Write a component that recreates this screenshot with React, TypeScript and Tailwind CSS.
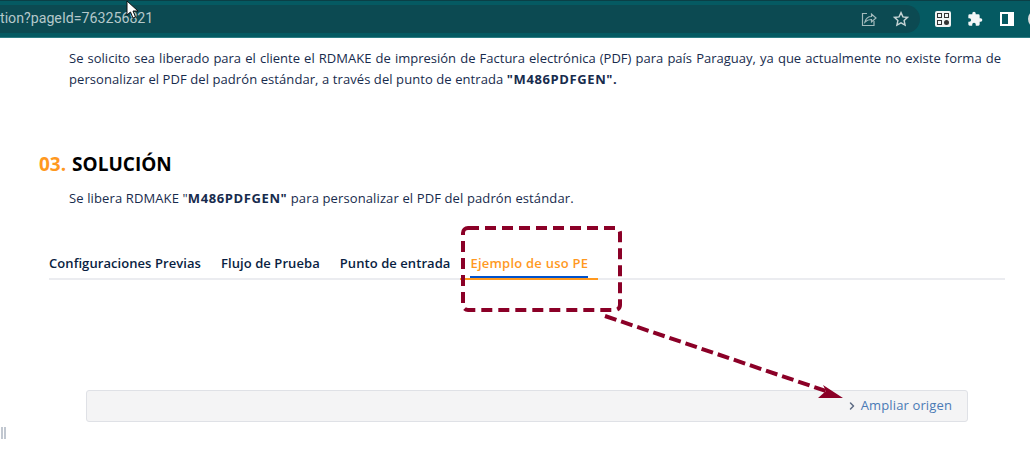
import React from "react";
import { ChevronRight } from "lucide-react";

const font = "font-['Open_Sans','Noto_Sans',sans-serif]";

const Toolbar: React.FC = () => (
  <div className="relative h-[38px] bg-[#055a62] border-t-[1px] border-[#0b3f46] border-b-[1px] border-b-[#2c7d84] flex items-center overflow-hidden">
    <div className="h-[28px] w-[920px] shrink-0 -mt-[1px] bg-[#0c4a52] rounded-r-[14px] flex items-center justify-between pr-[11px] overflow-hidden">
      <span className="text-[14.2px] text-[#b5c8ca] font-['Roboto',sans-serif] whitespace-nowrap">
        tion?pageId=763256821
      </span>
      <div className="flex items-center gap-[16px]">
        <svg width="16" height="16" viewBox="0 0 16 16" fill="none" stroke="#a3babc" strokeWidth="1.2">
          <path d="M6 2.500H1.500V14.500H13V10" />
          <path d="M4 11c1-4 4-5.500 6.500-5.500V3l4.500 4-4.500 4V8.500C8 8.500 6 9 4 11z" />
        </svg>
        <svg width="16" height="16" viewBox="0 0 24 24" fill="none" stroke="#c3d2d3" strokeWidth="2.2">
          <path d="M12 2.500l2.900 6.300 6.900.8-5.100 4.700 1.400 6.800-6.100-3.400-6.100 3.400 1.400-6.800-5.100-4.700 6.900-.8z" />
        </svg>
      </div>
    </div>
    <div className="ml-[15px] shrink-0 w-[16px] h-[16px] bg-[#f1f4f4] rounded-[2px] flex items-center justify-center">
      <svg width="14" height="14" viewBox="0 0 14 14" fill="#333">
        <path d="M1 1h5v5H1zM8 1h5v5H8zM1 8h5v5H1z" />
        <path d="M2 2h3v3H2zM9 2h3v3H9zM2 9h3v3H2z" fill="#f1f4f4" />
        <circle cx="10.500" cy="10.500" r="2.500" />
      </svg>
    </div>
    <svg className="ml-[16px] shrink-0" width="16" height="16" viewBox="0 0 24 24" fill="#f4f7f7">
      <path d="M20.500 11H19V7a2 2 0 0 0-2-2h-4V3.500a2.500 2.500 0 0 0-5 0V5H4a2 2 0 0 0-2 2v3.800h1.500a2.700 2.700 0 0 1 0 5.400H2V20a2 2 0 0 0 2 2h3.800v-1.500a2.700 2.700 0 0 1 5.400 0V22H17a2 2 0 0 0 2-2v-4h1.500a2.500 2.500 0 0 0 0-5z" />
    </svg>
    <div className="ml-[17px] shrink-0 w-[14px] h-[14px] bg-white p-[2px] flex justify-start">
      <div className="w-[6px] h-full bg-[#055a62]" />
    </div>
    <div className="ml-[14px] shrink-0 w-[18px] h-[18px] rounded-full bg-[#d8dcdc]" />
  </div>
);

const tabs = ["Configuraciones Previas", "Flujo de Prueba", "Punto de entrada"];

const App: React.FC = () => (
  <div className={`relative h-[471px] w-[1030px] overflow-hidden bg-white ${font}`}>
    <Toolbar />

    <div className="ml-[69px] mr-[29px] mt-[10px] text-[13px] leading-[21px] text-[#172b4d]">
      <p className="[text-align-last:justify]">
        Se solicito sea liberado para el cliente el RDMAKE de impresión de Factura electrónica (PDF) para país Paraguay, ya que actualmente no existe forma de
      </p>
      <p className="tracking-[0.08px]">
        personalizar el PDF del padrón estándar, a través del punto de entrada <strong className="tracking-[0.6px]">"M486PDFGEN".</strong>
      </p>
    </div>

    <h2 className="ml-[39px] mt-[62px] text-[19px] leading-[24px] font-bold text-black">
      <span className="text-[#ff991f]">03.</span> <span className="ml-[1px]">SOLUCIÓN</span>
    </h2>

    <p className="ml-[69px] mt-[12px] text-[13px] leading-[21px] tracking-[0.12px] text-[#172b4d]">
      Se libera RDMAKE "<strong className="tracking-[0.6px]">M486PDFGEN"</strong> para personalizar el PDF del padrón estándar.
    </p>

    <div className="ml-[49px] mr-[25px] mt-[40px] h-[31px] border-b-[2px] border-[#ebecf0] flex gap-[20px] text-[13px] leading-[29px] tracking-[0.07px] font-semibold text-[#091e42]">
      {tabs.map((tab) => (
        <span key={tab} className="whitespace-nowrap">{tab}</span>
      ))}
      <span className="relative whitespace-nowrap text-[#ff991f] tracking-[0.22px]">
        Ejemplo de uso PE
        <span className="absolute left-0 right-0 bottom-0 h-[2px] bg-[#0052cc]" />
        <span className="absolute left-[-10px] right-[-10px] bottom-[-2px] h-[2px] bg-[#ff991f]" />
      </span>
    </div>

    <div className="ml-[86px] mr-[62px] mt-[110px] h-[32px] bg-[#f4f4f5] border border-[#dfe1e6] rounded-[3px] flex items-center justify-end pr-[15px] gap-[3px] text-[13px] tracking-[0.13px] text-[#4a7ab5]">
      <ChevronRight size={12} strokeWidth={3} className="text-[#5e6c84]" />
      <span>Ampliar origen</span>
    </div>

    <div className="absolute left-[1px] top-[427px] flex gap-[1px]">
      <div className="w-[2px] h-[12px] bg-[#c1c7d0]" />
      <div className="w-[2px] h-[12px] bg-[#c1c7d0]" />
    </div>

    {/* annotation drawn over the page */}
    <svg className="absolute left-0 top-0 pointer-events-none" width="1030" height="471" fill="none">
      <rect x="463" y="228" width="157" height="82" rx="5" stroke="#8b0027" strokeWidth="4" strokeDasharray="11 6" />
      <path d="M605 316L826 391" stroke="#8b0027" strokeWidth="4" strokeDasharray="12 5" />
      <path d="M843 398L818 398L826 391L823 385Z" fill="#8b0027" />
    </svg>

    {/* mouse cursor */}
    <svg className="absolute left-[126px] top-0" width="13" height="20" viewBox="0 0 13 20">
      <path d="M1 1V15L4.500 12L7 18L9.500 17L7 11H12Z" fill="#fff" stroke="#111" strokeWidth="1" />
    </svg>
  </div>
);

export default App;
